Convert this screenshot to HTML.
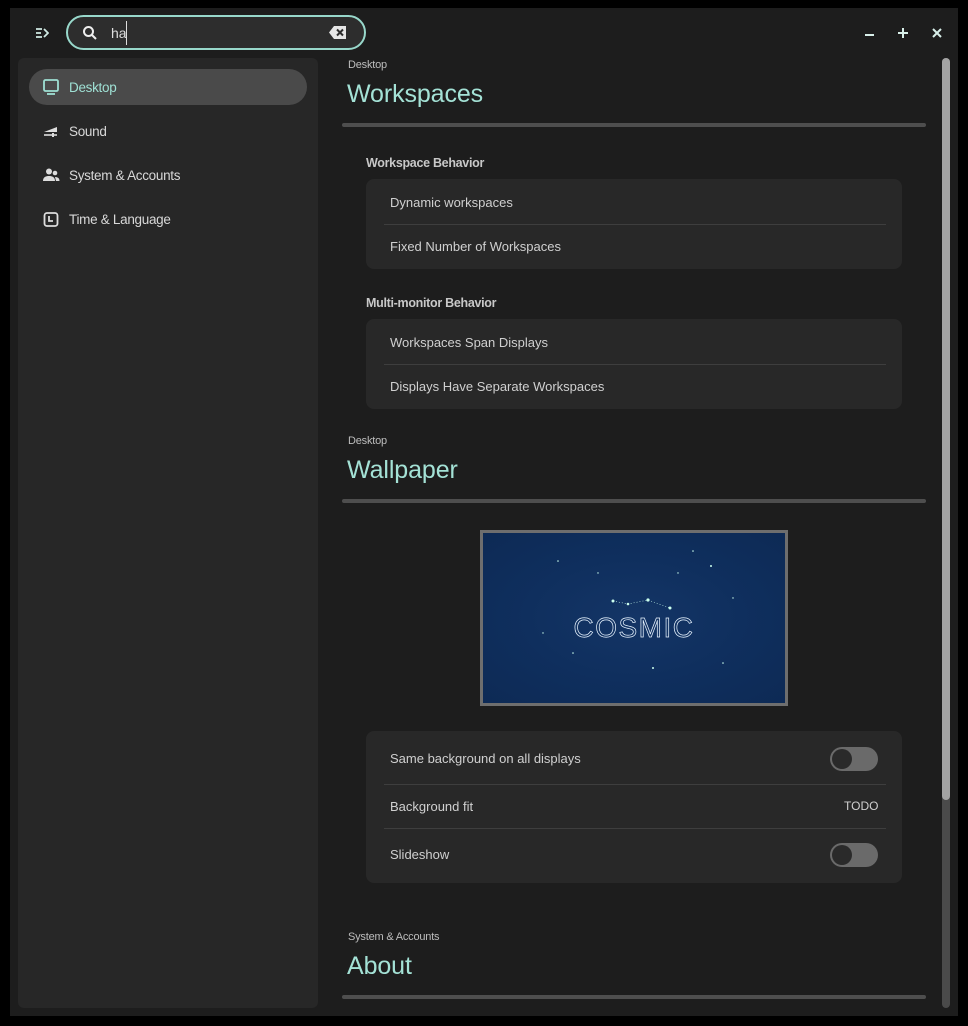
<!DOCTYPE html>
<html><head><meta charset="utf-8"><style>
*{margin:0;padding:0;box-sizing:border-box}
body{width:968px;height:1026px;background:#000;font-family:"Liberation Sans",sans-serif;overflow:hidden;position:relative}
.win{position:absolute;left:10px;top:8px;width:948px;height:1008px;background:#1d1d1d}
.a{position:absolute}
.side{left:18px;top:58px;width:300px;height:950px;background:#272727;border-radius:6px}
.nav{position:absolute;left:29px;height:36px;width:278px;border-radius:18px;color:#d8d8d8;font-size:13.5px;line-height:38px;padding-left:40px;letter-spacing:-0.3px}
.nav svg{position:absolute;left:14px;top:10px}
.sel{background:#4a4a4a;color:#9fe0d4}
.crumb{font-size:11px;color:#bdbdbd;letter-spacing:-0.2px}
.title{font-size:25px;color:#a4e2d6;letter-spacing:-0.1px}
.bar{height:4px;background:#4e4e4e;border-radius:2px}
.hd{font-size:12.5px;font-weight:bold;color:#c8c8c8;letter-spacing:-0.3px}
.card{background:#282828;border-radius:8px}
.row{position:absolute;left:24px;font-size:13px;color:#d0d0d0;letter-spacing:0}
.sep{position:absolute;left:18px;right:16px;height:1px;background:#3e3e3e}
.tog{position:absolute;width:48px;height:24px;border-radius:12px;background:#6a6a6a}
.tog::after{content:"";position:absolute;left:2px;top:2px;width:20px;height:20px;border-radius:10px;background:#2a2a2a}
</style></head><body>
<div class="win">
</div>
<!-- header -->
<svg class="a" style="left:35px;top:27px" width="14" height="12" viewBox="0 0 14 12"><path d="M1 2h6M1 6h5M1 10h6M9 2l4 4-4 4" stroke="#cfe9e3" stroke-width="1.8" fill="none"/></svg>
<div class="a" style="left:66px;top:15px;width:300px;height:35px;border:2px solid #98d8cb;border-radius:18px;background:#2d2d2d"></div>
<svg class="a" style="left:82px;top:25px" width="16" height="16" viewBox="0 0 16 16"><circle cx="6.5" cy="6.5" r="4.5" stroke="#eee" stroke-width="2" fill="none"/><path d="M10 10l4 4" stroke="#eee" stroke-width="2"/></svg>
<div class="a" style="left:111px;top:25px;font-size:14px;color:#ddd">ha</div>
<div class="a" style="left:126px;top:21px;width:1px;height:24px;background:#ddd"></div>
<svg class="a" style="left:329px;top:26px" width="17" height="13" viewBox="0 0 17 13"><path d="M5 0h12v13H5L0 6.5z" fill="#e6e6e6"/><path d="M8 3.5l6 6M14 3.5l-6 6" stroke="#2d2d2d" stroke-width="2"/></svg>
<svg class="a" style="left:864px;top:27px" width="80" height="12" viewBox="0 0 80 12"><path d="M1 8h9" stroke="#d8efe9" stroke-width="2"/><path d="M34 6h10M39 1v10" stroke="#d8efe9" stroke-width="2"/><path d="M69 2l8 8M77 2l-8 8" stroke="#d8efe9" stroke-width="2"/></svg>
<!-- sidebar -->
<div class="a side"></div>
<div class="nav sel" style="top:69px"><svg width="16" height="16" viewBox="0 0 16 16"><rect x="1" y="1" width="14" height="11" rx="1.5" stroke="#9fe0d4" stroke-width="1.8" fill="none"/><path d="M4 15h8" stroke="#9fe0d4" stroke-width="1.8"/></svg>Desktop</div>
<div class="nav" style="top:113px"><svg width="16" height="16" viewBox="0 0 16 16"><path d="M1 9L14 4v5z" fill="#ddd"/><path d="M1 12h13" stroke="#ddd" stroke-width="1.6"/><rect x="9" y="10" width="2" height="4" fill="#ddd"/></svg>Sound</div>
<div class="nav" style="top:157px"><svg width="17" height="16" viewBox="0 0 17 16"><circle cx="6" cy="4.5" r="3" fill="#ddd"/><circle cx="12" cy="6" r="2.3" fill="#ddd"/><path d="M0 14c0-4 3-5 6-5s6 1 6 5z" fill="#ddd"/><path d="M12 10c2.5 0 4.5 1 4.5 4H13z" fill="#ddd"/></svg>System &amp; Accounts</div>
<div class="nav" style="top:201px"><svg width="16" height="17" viewBox="0 0 16 17"><rect x="1.5" y="2" width="13" height="13" rx="2.5" stroke="#ddd" stroke-width="1.8" fill="none"/><path d="M6 5v5h4" stroke="#ddd" stroke-width="1.8" fill="none"/></svg>Time &amp; Language</div>
<!-- scrollbar -->
<div class="a" style="left:942px;top:58px;width:8px;height:950px;background:#4a4a4a;border-radius:4px"></div>
<div class="a" style="left:942px;top:58px;width:8px;height:742px;background:#a3a3a3;border-radius:4px"></div>
<!-- Workspaces -->
<div class="a crumb" style="left:348px;top:59px">Desktop</div>
<div class="a title" style="left:347px;top:80px">Workspaces</div>
<div class="a bar" style="left:342px;top:123px;width:584px"></div>
<div class="a hd" style="left:366px;top:156px">Workspace Behavior</div>
<div class="a card" style="left:366px;top:179px;width:536px;height:90px">
<div class="row" style="top:16px">Dynamic workspaces</div><div class="sep" style="top:45px"></div>
<div class="row" style="top:60px">Fixed Number of Workspaces</div></div>
<div class="a hd" style="left:366px;top:296px">Multi-monitor Behavior</div>
<div class="a card" style="left:366px;top:319px;width:536px;height:90px">
<div class="row" style="top:16px">Workspaces Span Displays</div><div class="sep" style="top:45px"></div>
<div class="row" style="top:60px">Displays Have Separate Workspaces</div></div>
<!-- Wallpaper -->
<div class="a crumb" style="left:348px;top:435px">Desktop</div>
<div class="a title" style="left:347px;top:456px">Wallpaper</div>
<div class="a bar" style="left:342px;top:499px;width:584px"></div>
<div class="a" style="left:480px;top:530px;width:308px;height:176px;border:3px solid #6e6e6e;background:radial-gradient(ellipse at 50% 50%,#143566 0%,#0f2f5e 50%,#0d2a55 100%)">
<svg width="302" height="170" viewBox="0 0 302 170" style="position:absolute;left:0;top:0">
<g fill="#cfe">
<circle cx="130" cy="68" r="1.5"/><circle cx="145" cy="71" r="1.3"/><circle cx="165" cy="67" r="1.6"/><circle cx="187" cy="75" r="1.5"/>
<circle cx="75" cy="28" r="0.8"/><circle cx="228" cy="33" r="1"/><circle cx="210" cy="18" r="0.8"/><circle cx="90" cy="120" r="0.8"/><circle cx="170" cy="135" r="1"/><circle cx="240" cy="130" r="0.8"/><circle cx="60" cy="100" r="0.7"/><circle cx="250" cy="65" r="0.7"/><circle cx="115" cy="40" r="0.7"/><circle cx="195" cy="40" r="0.7"/>
</g>
<path d="M130 68L145 71 165 67 187 75" stroke="#cfe" stroke-width="0.6" stroke-dasharray="1 2" fill="none"/>
<text x="151" y="104" text-anchor="middle" font-family="Liberation Sans,sans-serif" font-size="28" fill="none" stroke="#e8f4ff" stroke-width="0.7" letter-spacing="1.5">COSMIC</text>
</svg></div>
<div class="a card" style="left:366px;top:731px;width:536px;height:152px">
<div class="row" style="top:20px">Same background on all displays</div><div class="tog" style="left:464px;top:16px"></div>
<div class="sep" style="top:53px"></div>
<div class="row" style="top:68px">Background fit</div><div class="row" style="left:478px;top:68px;font-size:12px">TODO</div>
<div class="sep" style="top:97px"></div>
<div class="row" style="top:116px">Slideshow</div><div class="tog" style="left:464px;top:112px"></div></div>
<!-- About -->
<div class="a crumb" style="left:348px;top:931px">System &amp; Accounts</div>
<div class="a title" style="left:347px;top:952px">About</div>
<div class="a bar" style="left:342px;top:995px;width:584px"></div>
</body></html>
